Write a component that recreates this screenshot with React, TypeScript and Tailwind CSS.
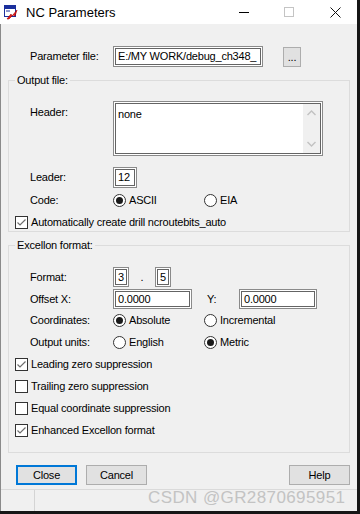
import type { ReactNode } from "react";

function Sunken({ className, children }: { className: string; children?: ReactNode }) {
  return (
    <div className={`border border-[#8a8a8a] bg-white p-px ${className}`}>
      <div className="h-full w-full border border-[#646464] bg-white overflow-hidden whitespace-nowrap pl-[2px] flex items-center">
        {children}
      </div>
    </div>
  );
}

function Radio({ checked, label }: { checked?: boolean; label: string }) {
  return (
    <span className="flex items-center gap-[3px]">
      <span className="w-[13px] h-[13px] rounded-full border border-[#333] bg-white flex items-center justify-center">
        {checked && <span className="w-[7px] h-[7px] rounded-full bg-[#1a1a1a]" />}
      </span>
      <span>{label}</span>
    </span>
  );
}

function Check({ checked, label }: { checked?: boolean; label: string }) {
  return (
    <div className="h-[16px] flex items-center gap-[3px]">
      <span className="w-[13px] h-[13px] border border-[#333] bg-white flex items-center justify-center">
        {checked && (
          <svg width="11" height="11" viewBox="0 0 11 11">
            <path d="M1.5 5.5 L4 8 L9.5 2.5" fill="none" stroke="#6e6e6e" strokeWidth="1.2" />
          </svg>
        )}
      </span>
      <span>{label}</span>
    </div>
  );
}

function Btn({ label, primary }: { label: string; primary?: boolean }) {
  return (
    <div
      className={`w-[61px] h-[20px] bg-[#e1e1e1] flex items-center justify-center ${
        primary ? "border-2 border-[#0078d7]" : "border border-[#adadad]"
      }`}
    >
      {label}
    </div>
  );
}

function AppIcon() {
  return (
    <svg width="14" height="15" viewBox="0 0 14 15">
      <rect x="0.5" y="0.5" width="11" height="11" fill="#fff" stroke="#1b2f9c" />
      <rect x="1" y="1" width="10" height="3" fill="#1b2f9c" />
      <rect x="2" y="5.5" width="4" height="1" fill="#1b2f9c" />
      <path d="M3 14 L7 9 L8 11 L13 5 L11 11 L9 10 L5 14 Z" fill="#e01b1b" stroke="#a00" strokeWidth="0.6" />
    </svg>
  );
}

export default function App() {
  return (
    <div className="w-[360px] h-[514px] bg-[#161616] font-['Liberation_Sans',Arial,sans-serif] text-[11px] leading-[13px] tracking-[-0.2px] text-black overflow-hidden">
      <div className="w-[357px] h-[511px] bg-[#f0f0f0] flex flex-col relative">
        {/* Title bar */}
        <div className="h-[24px] bg-white flex items-center shrink-0">
          <div className="pl-[4px] pt-[1px]">
            <AppIcon />
          </div>
          <span className="ml-[8px] text-[13px] tracking-normal">NC Parameters</span>
          <div className="ml-auto flex items-center">
            <span className="w-[10px] h-px bg-black mr-[35px]" />
            <span className="w-[10px] h-[10px] border border-[#c4c4c4] mr-[36px]" />
            <svg width="11" height="11" viewBox="0 0 11 11" className="mr-[16px]">
              <path d="M0.5 0.5 L10.5 10.5 M10.5 0.5 L0.5 10.5" stroke="#111" strokeWidth="1" />
            </svg>
          </div>
        </div>

        <div className="flex-1 border-l border-[#8a8a8a] flex flex-col">
          {/* Parameter file */}
          <div className="mt-[22px] h-[21px] flex items-center pl-[29px]">
            <span className="w-[83px]">Parameter file:</span>
            <Sunken className="w-[150px] h-[21px]">E:/MY WORK/debug_ch348_</Sunken>
            <div className="ml-[20px] w-[18px] h-[20px] bg-[#e1e1e1] border border-[#adadad] flex items-end justify-center pb-[3px] leading-none">
              ...
            </div>
          </div>

          {/* Output file group */}
          <fieldset className="mt-[7px] mx-[7px] border border-[#dcdcdc] pl-[6px] pr-[6px] pt-[14px] pb-px">
            <legend className="px-[2px]">Output file:</legend>
            <div className="flex pl-[15px]">
              <span className="w-[83px] pt-[5px]">Header:</span>
              <div className="w-[210px] h-[55px] border border-[#8a8a8a] bg-white p-px">
                <div className="h-full w-full border border-[#646464] flex">
                  <span className="flex-1 pl-[2px] pt-[4px]">none</span>
                  <div className="w-[17px] bg-[#f0f0f0] flex flex-col items-center justify-between py-[6px]">
                    <svg width="9" height="6" viewBox="0 0 9 6">
                      <path d="M0.5 5 L4.5 1 L8.5 5" fill="none" stroke="#c2c2c2" strokeWidth="1.4" />
                    </svg>
                    <svg width="9" height="6" viewBox="0 0 9 6">
                      <path d="M0.5 1 L4.5 5 L8.5 1" fill="none" stroke="#c2c2c2" strokeWidth="1.4" />
                    </svg>
                  </div>
                </div>
              </div>
            </div>
            <div className="mt-[11px] h-[21px] flex items-center pl-[15px]">
              <span className="w-[83px]">Leader:</span>
              <Sunken className="w-[24px] h-[21px]">12</Sunken>
            </div>
            <div className="mt-[4px] h-[16px] flex items-center pl-[15px]">
              <span className="w-[83px]">Code:</span>
              <div className="w-[91px]">
                <Radio checked label="ASCII" />
              </div>
              <Radio label="EIA" />
            </div>
            <div className="mt-[6px]">
              <Check checked label="Automatically create drill ncroutebits_auto" />
            </div>
          </fieldset>

          {/* Excellon format group */}
          <fieldset className="mt-[7px] mx-[7px] border border-[#dcdcdc] pl-[6px] pr-[6px] pt-[15px] pb-[14px]">
            <legend className="px-[2px]">Excellon format:</legend>
            <div className="h-[20px] flex items-center pl-[15px]">
              <span className="w-[83px]">Format:</span>
              <Sunken className="w-[16px] h-[20px]">3</Sunken>
              <span className="w-[26px] text-center">.</span>
              <Sunken className="w-[16px] h-[20px]">5</Sunken>
            </div>
            <div className="mt-[2px] h-[20px] flex items-center pl-[15px]">
              <span className="w-[83px]">Offset X:</span>
              <Sunken className="w-[79px] h-[20px]">0.0000</Sunken>
              <span className="ml-[15px] w-[32px]">Y:</span>
              <Sunken className="w-[78px] h-[20px]">0.0000</Sunken>
            </div>
            <div className="mt-[3px] h-[16px] flex items-center pl-[15px]">
              <span className="w-[83px]">Coordinates:</span>
              <div className="w-[91px]">
                <Radio checked label="Absolute" />
              </div>
              <Radio label="Incremental" />
            </div>
            <div className="mt-[6px] h-[16px] flex items-center pl-[15px]">
              <span className="w-[83px]">Output units:</span>
              <div className="w-[91px]">
                <Radio label="English" />
              </div>
              <Radio checked label="Metric" />
            </div>
            <div className="mt-[6px] flex flex-col gap-[6px]">
              <Check checked label="Leading zero suppression" />
              <Check label="Trailing zero suppression" />
              <Check label="Equal coordinate suppression" />
              <Check checked label="Enhanced Excellon format" />
            </div>
          </fieldset>

          {/* Buttons */}
          <div className="mt-[12px] flex items-center pl-[15px] pr-[7px]">
            <Btn primary label="Close" />
            <div className="ml-[9px]">
              <Btn label="Cancel" />
            </div>
            <div className="ml-auto">
              <Btn label="Help" />
            </div>
          </div>

          {/* Status strip */}
          <div className="mt-auto h-[22px] border-t border-[#dadada] flex">
            <div className="w-[34px] border-r border-[#d4d4d4]" />
          </div>
        </div>

        <span className="absolute left-[148px] top-[488px] text-[17px] leading-[20px] tracking-[0.4px] text-[#c3c3c3]">
          CSDN @GR2870695951
        </span>
      </div>
    </div>
  );
}
